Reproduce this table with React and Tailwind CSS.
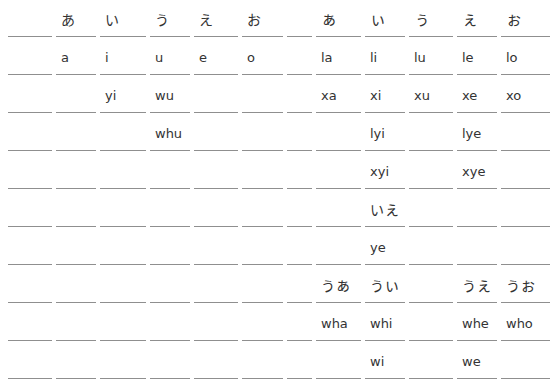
import React from 'react';

const rows = [
  ['', 'あ', 'い', 'う', 'え', 'お', '', 'ぁ', 'ぃ', 'ぅ', 'ぇ', 'ぉ'],
  ['', 'a', 'i', 'u', 'e', 'o', '', 'la', 'li', 'lu', 'le', 'lo'],
  ['', '', 'yi', 'wu', '', '', '', 'xa', 'xi', 'xu', 'xe', 'xo'],
  ['', '', '', 'whu', '', '', '', '', 'lyi', '', 'lye', ''],
  ['', '', '', '', '', '', '', '', 'xyi', '', 'xye', ''],
  ['', '', '', '', '', '', '', '', 'いぇ', '', '', ''],
  ['', '', '', '', '', '', '', '', 'ye', '', '', ''],
  ['', '', '', '', '', '', '', 'うぁ', 'うぃ', '', 'うぇ', 'うぉ'],
  ['', '', '', '', '', '', '', 'wha', 'whi', '', 'whe', 'who'],
  ['', '', '', '', '', '', '', '', 'wi', '', 'we', ''],
];

const small = 'ぁぃぅぇぉ';

// kana are drawn a touch larger so they match the bitmap-ish font in the shot
const Text = ({ value }) => {
  if (!/[\u3040-\u309f]/.test(value)) return value;
  return [...value].map((ch, i) => (
    <span
      key={i}
      className={small.includes(ch) ? 'text-[16px] leading-none' : 'text-[14px] leading-none'}
    >
      {ch}
    </span>
  ));
};

export default function App() {
  return (
    <div className="w-[559px] h-[384px] bg-white overflow-hidden pl-[8px] pt-[3px] text-[13px] text-[#333333] font-['DejaVu_Sans','Noto_Sans_CJK_JP',sans-serif]">
      <div className="grid grid-cols-[44px_40px_46px_40px_44px_41px_25px_45px_40px_44px_40px_49px] gap-x-[4px] gap-y-[4px]">
        {rows.map((row, r) =>
          row.map((cell, c) => (
            <div
              key={r + '-' + c}
              className="h-[34px] border-b border-[#8f8f8f] flex items-center pl-[5px] whitespace-nowrap"
            >
              <Text value={cell} />
            </div>
          ))
        )}
      </div>
    </div>
  );
}
